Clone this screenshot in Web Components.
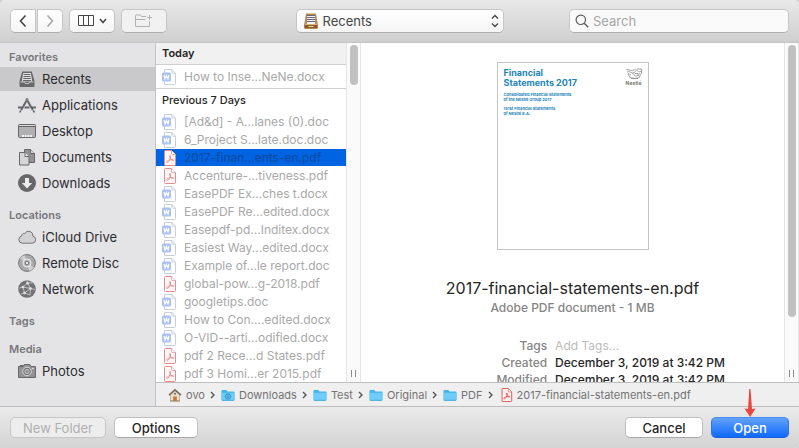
<!DOCTYPE html>
<html lang="en">
<head>
<meta charset="utf-8">
<meta name="viewport" content="width=device-width, initial-scale=1">
<title>Open</title>
<style>
  html, body { height: 100%; }
  body {
    margin: 0; background: #cfcfcf; color: #262626;
    font: 13px/18px Inter, "Liberation Sans", sans-serif;
  }
</style>
</head>
<body>
<open-dialog>
  <dialog-toolbar slot="toolbar"></dialog-toolbar>

  <side-section slot="sidebar" heading="Favorites">
    <side-item icon="recents" selected>Recents</side-item>
    <side-item icon="applications">Applications</side-item>
    <side-item icon="desktop">Desktop</side-item>
    <side-item icon="documents">Documents</side-item>
    <side-item icon="downloads">Downloads</side-item>
  </side-section>
  <side-section slot="sidebar" heading="Locations">
    <side-item icon="cloud">iCloud Drive</side-item>
    <side-item icon="disc">Remote Disc</side-item>
    <side-item icon="network">Network</side-item>
  </side-section>
  <side-section slot="sidebar" heading="Tags"></side-section>
  <side-section slot="sidebar" heading="Media">
    <side-item icon="photos">Photos</side-item>
  </side-section>

  <file-column slot="columns">
    <file-group heading="Today" current>
      <file-row kind="word">How to Inse...NeNe.docx</file-row>
    </file-group>
    <file-group heading="Previous 7 Days">
      <file-row kind="word">[Ad&amp;d] - A...lanes (0).doc</file-row>
      <file-row kind="word">6_Project S...late.doc.doc</file-row>
      <file-row kind="pdf" selected>2017-finan...ents-en.pdf</file-row>
      <file-row kind="pdf">Accenture-...tiveness.pdf</file-row>
      <file-row kind="word">EasePDF Ex...ches t.docx</file-row>
      <file-row kind="word">EasePDF Re...edited.docx</file-row>
      <file-row kind="word">Easepdf-pd...Inditex.docx</file-row>
      <file-row kind="word">Easiest Way...edited.docx</file-row>
      <file-row kind="word">Example of...le report.doc</file-row>
      <file-row kind="pdf">global-pow...g-2018.pdf</file-row>
      <file-row kind="word">googletips.doc</file-row>
      <file-row kind="word">How to Con....edited.docx</file-row>
      <file-row kind="word">O-VID--arti...odified.docx</file-row>
      <file-row kind="pdf">pdf 2 Rece...d States.pdf</file-row>
      <file-row kind="pdf">pdf 3 Homi...er 2015.pdf</file-row>
    </file-group>
  </file-column>
  <scroll-track slot="columns" style="--thumb: 12%"></scroll-track>
  <file-preview slot="columns">
    <report-cover slot="cover"></report-cover>
    <span slot="name">2017-financial-statements-en.pdf</span>
    <span slot="kind">Adobe PDF document - 1 MB</span>
    <span slot="created">December 3, 2019 at 3:42 PM</span>
    <span slot="modified">December 3, 2019 at 3:42 PM</span>
  </file-preview>
  <scroll-track slot="columns" style="--thumb: 82%"></scroll-track>

  <path-crumb slot="path" icon="home">ovo</path-crumb>
  <path-crumb slot="path" icon="folderDown">Downloads</path-crumb>
  <path-crumb slot="path" icon="folder">Test</path-crumb>
  <path-crumb slot="path" icon="folder">Original</path-crumb>
  <path-crumb slot="path" icon="folder">PDF</path-crumb>
  <path-crumb slot="path" icon="pdf" last>2017-financial-statements-en.pdf</path-crumb>

  <push-button slot="left" disabled style="--width: 96px">New Folder</push-button>
  <push-button slot="left" style="--width: 84px">Options</push-button>
  <push-button slot="right" style="--width: 78px">Cancel</push-button>
  <push-button slot="right" primary pointed style="--width: 78px">Open</push-button>
</open-dialog>

<script>
const svg = (w, h, body) => `<svg width="${w}" height="${h}" viewBox="0 0 ${w} ${h}" fill="none" aria-hidden="true">${body}</svg>`;

const FOLDER = `
  <path d="M.5 2.500a1 1 0 0 1 1-1h3.800l1.200 1.500h6a1 1 0 0 1 1 1V11a1 1 0 0 1-1 1h-11a1 1 0 0 1-1-1z" fill="#45b3e6"/>
  <path d="M.5 4.200h13V11a1 1 0 0 1-1 1h-11a1 1 0 0 1-1-1z" fill="#6fcbf7"/>
  <path d="M1 11.800h12" stroke="#4aaede"/>`;

const ICONS = {
  recents: svg(18, 18, `
    <path d="M4.200 1.500h9.600L16.500 11v5a1 1 0 0 1-1 1h-13a1 1 0 0 1-1-1v-5z" fill="#67676a"/>
    <path d="M5.200 3h7.600l1.500 8.500H3.700z" fill="#dededf"/>
    <path d="M5.700 4.500h6.600M5.500 6.500h7M5.200 8.500h7.600M4.900 10.500h8.200" stroke="#67676a"/>
    <path d="M2.500 12h4l.8 1.500h3.400l.8-1.500h4" stroke="#c9c9cb"/>`),
  applications: svg(18, 18, `
    <g stroke="#67676a" stroke-width="2">
      <path d="M9.800 2.500 3.200 14M8.200 2.500 14.800 14"/>
      <path d="M0 11.500h4M6.500 11.500h5M14 11.500h4" />
      <path d="M2.800 14.300 1.700 16.500M15.200 14.300l1.300 2.200" stroke-width="1.500"/>
    </g>
    <path d="M9 1.500v3" stroke="#e4e4e6" stroke-width=".6"/>`),
  desktop: svg(18, 18, `
    <rect x=".5" y="2.500" width="17" height="13" rx="1" fill="#b0b0b2" stroke="#67676a"/>
    <path d="M1 4.500h16" stroke="#67676a"/><path d="M1 3.500h16" stroke="#d8d8da"/>
    <path d="M4 14h10" stroke="#f2f2f3" stroke-width="2" stroke-dasharray="2 .7"/>`),
  documents: svg(18, 18, `
    <path d="M6.500 1.500h6l4 4v9h-10z" fill="#929294" stroke="#67676a"/>
    <path d="M12.500 1.500v4h4" fill="#d8d8da" stroke="#67676a"/>
    <path d="M1.500 4.500h5.500l4 4v8.500H1.500z" fill="#d5d5d7" stroke="#67676a"/>
    <path d="M7 4.500v4h4" fill="#ededee" stroke="#67676a"/>`),
  downloads: svg(18, 18, `
    <circle cx="9" cy="9" r="9" fill="#67676a"/>
    <path d="M7 4h4v5h3.200L9 14.500 3.800 9H7z" fill="#ededee"/>`),
  cloud: svg(18, 18, `
    <path d="M4.300 15.200a3.700 3.700 0 0 1-.6-7.300 2.600 2.600 0 0 1 3.200-2.500 4.300 4.300 0 0 1 8 2.700 3.600 3.600 0 0 1-.7 7.100z" fill="#d2d2d4" stroke="#737376"/>`),
  disc: svg(18, 18, `
    <circle cx="9" cy="9" r="8.400" fill="#aaaaac" stroke="#737376"/>
    <path d="M9 9 2 4.500A8 8 0 0 1 7 1.300zM9 9l7 4.500a8 8 0 0 1-5 3.200z" fill="#d0d0d2"/>
    <circle cx="9" cy="9" r="4" fill="#b9b9bb" stroke="#ededee"/>
    <circle cx="9" cy="9" r="1.800" fill="#e4e4e6" stroke="#737376"/>`),
  network: svg(18, 18, `
    <circle cx="9" cy="9" r="8.800" fill="#737376"/>
    <g stroke="#c6c6c8" stroke-width=".9">
      <path d="M9.500 3 5 7l-3.500 1M9.500 3l3 5.500 4.500 1M5 7l1.500 6L3 14M5 7l7.500 1.500-6 4.500M12.500 8.500 12 15l-5.500-2M9.500 3 9 .5M9.500 3l5-.2"/>
    </g>
    <g fill="#e4e4e6"><circle cx="9.500" cy="3.200" r="1.300"/><circle cx="5" cy="7" r="1.300"/><circle cx="12.500" cy="8.500" r="1.300"/><circle cx="6.500" cy="13" r="1.300"/></g>`),
  photos: svg(18, 18, `
    <path d="M2 3h3v1.500H2z" fill="#67676a"/>
    <path d="M.5 4.500H5l1.200-2h5.600l1.200 2h4.500v11H.5z" fill="#929294" stroke="#67676a"/>
    <circle cx="9" cy="9.500" r="4.300" fill="#737376" stroke="#dededf"/>
    <circle cx="9" cy="9.500" r="2.200" fill="#929294" stroke="#c6c6c8"/>
    <circle cx="15" cy="6.500" r=".8" fill="#ededee"/>`),
  tray: svg(14, 16, `
    <path d="M2 .5h10l1.800 11V15a1 1 0 0 1-1 1H1.200a1 1 0 0 1-1-1v-3.500z" fill="#b98a52"/>
    <path d="M3 2h8v9H3z" fill="#f2f2f5"/>
    <path d="M3 2.500h8M3 4.500h8M3 6.500h8M3 8.500h8" stroke="#63677d"/>
    <path d="M.5 11.500h13V15H.5z" fill="#8a5a2c"/>
    <path d="M1 11.500h12" stroke="#dfb374"/>
    <path d="M4.500 13.500h5" stroke="#f0d6a0"/>`),
  word: svg(14, 16, `
    <path d="M2.500.5h7.300l3.700 3.700v10.300a1 1 0 0 1-1 1h-10z" fill="#fff" stroke="#c6cfda"/>
    <path d="M9.800.5v2.700a1 1 0 0 0 1 1h2.700" stroke="#c6cfda"/>
    <rect y="3.500" width="9" height="9" rx="1.500" fill="#a9c1f1"/>
    <path d="m2 6 1 4 1.500-3.500L6 10l1-4" stroke="#fff" stroke-width="1.200"/>`),
  pdf: svg(14, 16, `
    <path d="M3.500.5h6l4 4v10a1 1 0 0 1-1 1h-9a1 1 0 0 1-1-1v-13a1 1 0 0 1 1-1z" fill="#fff6f6" stroke="currentColor"/>
    <path d="M9.500.5V3.500a1 1 0 0 0 1 1h3" fill="#fff" stroke="currentColor" stroke-width=".7"/>
    <path d="M4.700 12.300c-.8-.8 1-2 3-2.500 1.500-.4 3.600-.5 3.800.2.200.9-1.600.5-2.700-.8C7.700 8 7.100 6 7.900 5.600c.9-.4.900 1.700.1 3.600-.7 1.700-2.300 4-3.300 3.100z" stroke="currentColor" stroke-width=".9"/>`),
  home: svg(14, 14, `
    <path d="M2.500 6.500 7 2.500l4.500 4V13h-9z" fill="#e9dfcc" stroke="#a79a84" stroke-width=".6"/>
    <path d="M1 7.200 7 1.800l6 5.400" stroke="#7c6d60" stroke-width="1.600"/>
    <path d="M5.200 8.500h3.600V13H5.200z" fill="#ca7636"/>
    <circle cx="7" cy="5.700" r="1" fill="#5b6a7c"/>
    <path d="M2 13h10" stroke="#99876a"/>`),
  folder: svg(14, 13, FOLDER),
  folderDown: svg(14, 13, FOLDER + `
    <circle cx="7" cy="8" r="2.700" stroke="#2f90c2"/>
    <path d="M7 6v3M5.800 8 7 9.300 8.200 8" stroke="#2f90c2"/>`),
  back: svg(8, 14, `<path d="M6.500 1.500 1.500 7l5 5.500" stroke="#454545" stroke-width="1.600"/>`),
  forward: svg(8, 14, `<path d="m1.500 1.500 5 5.500-5 5.500" stroke="#a3a3a3" stroke-width="1.500"/>`),
  columns: svg(16, 12, `<path d="M.5.5h15v10H.5zM5.500.5v10M10.500.5v10" stroke="#454545"/>`),
  down: svg(8, 6, `<path d="m1 1 3 3.500L7 1" stroke="#454545" stroke-width="1.500"/>`),
  newFolder: svg(18, 14, `
    <path d="M11 2.500H6.500l-1-1.500H1a.5.500 0 0 0-.5.500v10.500a.5.500 0 0 0 .5.500h13.500V7.500M.5 5.500h10" stroke="#b0b0b0"/>
    <path d="M14.500 1v5M12 3.500h5" stroke="#b0b0b0"/>`),
  updown: svg(8, 14, `<path d="m1 4.500 3-3 3 3M1 9.500l3 3 3-3" stroke="#4b4b4b" stroke-width="1.500"/>`),
  search: svg(14, 14, `<circle cx="5.800" cy="5.800" r="4.700" stroke="#5c5c5c" stroke-width="1.200"/><path d="m9.200 9.200 4 4" stroke="#5c5c5c" stroke-width="1.400"/>`),
  crumb: svg(5, 8, `<path d="m1 1 3 3-3 3" stroke="#555" stroke-width="1.400"/>`),
  arrow: svg(12, 29, `<path d="M5.300 1 6.500 1 8 21l3.500-.5L6.200 29 .5 20.500l3.500.5z" fill="#e8483d"/>`)
};

// Base class: fills an open shadow root once.
class DialogElement extends HTMLElement {
  connectedCallback() {
    if (this.shadowRoot) return;
    this.attachShadow({ mode: "open" });
    this.shadowRoot.innerHTML = `<style>:host, * { box-sizing: border-box; } svg { display: block; flex: none; }</style>${this.template()}`;
  }

  template() {
    return "<slot></slot>";
  }
}

class OpenDialog extends DialogElement {
  template() {
    return `
      <style>
        :host {
          display: grid; grid-template-rows: auto minmax(0, 1fr) auto; height: 100vh;
          overflow: hidden; border-radius: 5px 5px 4px 4px; background: #ececec;
        }
        .body { display: grid; grid-template: minmax(0, 1fr) / 156px minmax(0, 1fr); min-height: 0; }
        aside {
          display: flex; flex-direction: column; gap: 12px; padding-top: 6px;
          background: #e4e4e7; border-right: 1px solid #c3c3c5; overflow: hidden;
        }
        main { display: grid; grid-template-rows: minmax(0, 1fr) auto; min-width: 0; min-height: 0; background: #fff; }
        .columns { display: grid; grid-template: minmax(0, 1fr) / 190px 15px minmax(0, 1fr) 15px; min-height: 0; overflow: hidden; }
        nav {
          display: flex; align-items: center; gap: 6px; height: 24px; padding: 0 12px;
          border-top: 1px solid #bfbfbf; background: #efefef; overflow: hidden;
        }
        footer {
          display: flex; justify-content: space-between; padding: 10px;
          border-top: 1px solid #bdbdbd; background: linear-gradient(#ebebeb, #d3d3d3);
        }
        footer div { display: flex; gap: 8px; }
      </style>
      <slot name="toolbar"></slot>
      <div class="body">
        <aside><slot name="sidebar"></slot></aside>
        <main>
          <div class="columns"><slot name="columns"></slot></div>
          <nav aria-label="Path"><slot name="path"></slot></nav>
        </main>
      </div>
      <footer>
        <div><slot name="left"></slot></div>
        <div><slot name="right"></slot></div>
      </footer>`;
  }
}

class DialogToolbar extends DialogElement {
  template() {
    return `
      <style>
        :host {
          display: grid; grid-template-columns: 1fr 208px 1fr; align-items: center;
          padding: 9px 10px; border-bottom: 1px solid #c4c4c4;
          background: linear-gradient(#e8e8e8, #cfcfcf);
        }
        .tools { display: flex; gap: 6px; }
        .pair { display: flex; gap: 1px; }
        button, select, input {
          height: 24px; margin: 0; border: 1px solid #c6c6c6; border-bottom-color: #adadad; border-radius: 5px;
          background: linear-gradient(#fff, #f5f5f5); font: inherit; color: #454545;
        }
        button { display: flex; align-items: center; justify-content: center; gap: 5px; width: 46px; padding: 0; }
        .pair button { width: 26px; }
        .pair button:first-child { border-radius: 5px 0 0 5px; }
        .pair button:last-child { border-radius: 0 5px 5px 0; }
        button:disabled { background: #f1f1f1; }
        label { display: grid; align-items: center; }
        label > * { grid-area: 1 / 1; }
        label svg { margin-left: 8px; pointer-events: none; z-index: 1; }
        select { appearance: none; width: 100%; padding: 0 24px 0 26px; }
        label .updown { justify-self: end; margin-right: 5px; z-index: 1; pointer-events: none; }
        .search { justify-self: end; width: 220px; }
        .search svg { margin-left: 6px; }
        input { width: 100%; padding: 0 8px 0 23px; background: #fafafa; outline: none; }
        input::placeholder { color: #a5a5a5; opacity: 1; }
      </style>
      <div class="tools">
        <div class="pair">
          <button aria-label="Back">${ICONS.back}</button>
          <button aria-label="Forward">${ICONS.forward}</button>
        </div>
        <button aria-label="View as columns">${ICONS.columns}${ICONS.down}</button>
        <button aria-label="New folder" disabled>${ICONS.newFolder}</button>
      </div>
      <label>
        ${ICONS.tray}
        <select aria-label="Location"><option>Recents</option></select>
        <span class="updown">${ICONS.updown}</span>
      </label>
      <label class="search">
        ${ICONS.search}
        <input type="text" placeholder="Search" aria-label="Search">
      </label>`;
  }
}

class SideSection extends DialogElement {
  template() {
    return `
      <style>
        :host { display: flex; flex-direction: column; gap: 2px; }
        h2 { margin: 0; padding-left: 9px; font-size: 11px; line-height: 16px; font-weight: 600; color: #77777a; }
      </style>
      <h2>${this.getAttribute("heading")}</h2>
      <slot></slot>`;
  }
}

class SideItem extends DialogElement {
  template() {
    return `
      <style>
        :host { display: block; }
        :host([selected]) { background: #c9c9cc; }
        a {
          display: flex; align-items: center; gap: 6px; height: 24px; padding-left: 18px;
          color: #2c2c2e; text-decoration: none; white-space: nowrap;
        }
      </style>
      <a href="#">${ICONS[this.getAttribute("icon")]}<span><slot></slot></span></a>`;
  }
}

class FileColumn extends DialogElement {
  template() {
    return `
      <style>:host { display: block; min-height: 0; overflow: hidden; background: #fff; }</style>
      <slot></slot>`;
  }
}

class FileGroup extends DialogElement {
  template() {
    return `
      <style>
        :host { display: block; }
        :host([current]) { border-bottom: 1px solid #d0d0d0; }
        h3 { margin: 0; padding: 2px 6px; font-size: 11px; line-height: 18px; font-weight: 500; color: #262626; }
        :host([current]) h3 { padding: 1px 6px 2px; background: #f1f1f1; border-bottom: 1px solid #d0d0d0; font-weight: 600; }
        .rows { display: grid; gap: 1px; padding-top: 2px; }
        :host([current]) .rows { padding: 3px 0; }
      </style>
      <h3>${this.getAttribute("heading")}</h3>
      <div class="rows"><slot></slot></div>`;
  }
}

class FileRow extends DialogElement {
  template() {
    return `
      <style>
        :host { display: block; color: #a9a9a9; }
        :host([selected]) { background: #0063e1; color: #0a4a9e; }
        button {
          display: flex; align-items: center; gap: 8px; width: 100%; height: 17px; padding: 0 6px;
          border: 0; background: none; font: inherit; font-size: 12px; color: inherit; white-space: nowrap;
        }
        .icon { color: #e88a8d; }
      </style>
      <button><span class="icon">${ICONS[this.getAttribute("kind")]}</span><span><slot></slot></span></button>`;
  }
}

class ScrollTrack extends DialogElement {
  template() {
    return `
      <style>
        :host {
          display: flex; flex-direction: column; justify-content: space-between; align-items: center;
          padding: 2px 0 5px; background: #fafafa; border: 1px solid #e6e6e6; border-width: 0 1px; min-height: 0;
        }
        .thumb { width: 8px; height: var(--thumb); border-radius: 4px; background: #c1c1c1; }
        .grip { width: 5px; height: 7px; border: 1px solid #8d8d8d; border-width: 0 1px; }
      </style>
      <div class="thumb"></div>
      <div class="grip"></div>`;
  }
}

class FilePreview extends DialogElement {
  template() {
    return `
      <style>
        :host { display: flex; flex-direction: column; align-items: center; min-height: 0; padding-top: 19px; overflow: hidden; background: #fff; }
        h1 { margin: 26px 0 0; font-size: 16px; line-height: 24px; font-weight: 400; color: #262626; }
        p { margin: 0; font-size: 12px; line-height: 16px; font-weight: 500; color: #858585; }
        dl {
          display: grid; grid-template-columns: 44% minmax(0, 1fr); column-gap: 8px; width: 100%;
          margin: 21px 0 0; font-size: 12px; line-height: 17px; font-weight: 500; white-space: nowrap;
        }
        dt { text-align: right; color: #858585; }
        dd { margin: 0; color: #262626; }
        input { display: block; width: 100%; height: 17px; padding: 0; border: 0; outline: none; font: inherit; font-weight: 400; background: none; }
        input::placeholder { color: #bcbcbc; opacity: 1; }
      </style>
      <slot name="cover"></slot>
      <h1><slot name="name"></slot></h1>
      <p><slot name="kind"></slot></p>
      <dl>
        <dt><label for="tags">Tags</label></dt>
        <dd><input id="tags" type="text" placeholder="Add Tags..."></dd>
        <dt>Created</dt><dd><slot name="created"></slot></dd>
        <dt>Modified</dt><dd><slot name="modified"></slot></dd>
      </dl>`;
  }
}

class ReportCover extends DialogElement {
  template() {
    return `
      <style>
        :host {
          display: flex; flex: none; justify-content: space-between; align-items: flex-start;
          width: 152px; height: 188px; padding: 5px 6px; border: 1px solid #c4c4c4; background: #fff; color: #2484b8;
        }
        h4, p { margin: 0; white-space: nowrap; }
        h4 { font-size: 9px; line-height: 10px; font-weight: 700; }
        p { margin-top: 4px; font-size: 4px; line-height: 5px; font-weight: 700; }
        .brand { display: grid; justify-items: center; font-size: 5px; line-height: 6px; font-weight: 700; color: #777; }
      </style>
      <div>
        <h4>Financial<br>Statements 2017</h4>
        <p>Consolidated Financial Statements<br>of the Nestlé Group 2017</p>
        <p>151st Financial Statements<br>of Nestlé S.A.</p>
      </div>
      <div class="brand">
        ${svg(16, 12, `
          <g stroke="#8c8c8c" stroke-width=".8">
            <path d="M.5 1.500c2-.5 3 1 5 1s3.500-1.500 5-.5 2 2.500 4.500 1.500M1 3c2 0 3 1.500 5 1.500M1.500 4.500C3 5 3 6.500 5 7M10 3c-2 1-3 3-1.500 4.500S13 7 13.500 5M3.500 8.500c2 2 7 2.500 10 .5M5 10.500h7M2 6l2 3.500M14.500 6l-1 3.500"/>
            <path d="m6 6 1.500-2M11.500 6l1.500 2.500M11 1h4.500v5M9 5.500h3" />
          </g>`)}
        <span>Nestlé</span>
      </div>`;
  }
}

class PathCrumb extends DialogElement {
  template() {
    return `
      <style>
        :host { display: flex; align-items: center; gap: 5px; font-size: 11px; line-height: 16px; white-space: nowrap; }
        a { display: flex; align-items: center; gap: 4px; color: #747474; text-decoration: none; }
        .icon { color: #e5413e; }
        .icon svg { height: 14px; }
      </style>
      <a href="#"><span class="icon">${ICONS[this.getAttribute("icon")]}</span><span><slot></slot></span></a>
      ${this.hasAttribute("last") ? "" : ICONS.crumb}`;
  }
}

class PushButton extends DialogElement {
  template() {
    const disabled = this.hasAttribute("disabled") ? "disabled" : "";
    return `
      <style>
        :host { display: block; position: relative; }
        button {
          display: block; width: var(--width); height: 21px; padding: 0; border: 1px solid #c0c0c0; border-bottom-color: #a9a9a9;
          border-radius: 5px; background: #fff; color: #262626; font: inherit; font-weight: 500; line-height: 18px;
        }
        button:disabled { background: #ededed; border-color: #c6c6c6; color: #b0b0b0; font-weight: 400; }
        :host([primary]) button { border-color: #4a8ff0 #2a74ee #1c62dc; background: linear-gradient(#62a3fa, #0f67fb); color: #fff; }
        .arrow { position: absolute; left: 50%; bottom: 100%; margin-left: -6px; pointer-events: none; }
      </style>
      <button ${disabled}><slot></slot></button>
      ${this.hasAttribute("pointed") ? `<span class="arrow">${ICONS.arrow}</span>` : ""}`;
  }
}

customElements.define("open-dialog", OpenDialog);
customElements.define("dialog-toolbar", DialogToolbar);
customElements.define("side-section", SideSection);
customElements.define("side-item", SideItem);
customElements.define("file-column", FileColumn);
customElements.define("file-group", FileGroup);
customElements.define("file-row", FileRow);
customElements.define("scroll-track", ScrollTrack);
customElements.define("file-preview", FilePreview);
customElements.define("report-cover", ReportCover);
customElements.define("path-crumb", PathCrumb);
customElements.define("push-button", PushButton);
</script>
</body>
</html>
